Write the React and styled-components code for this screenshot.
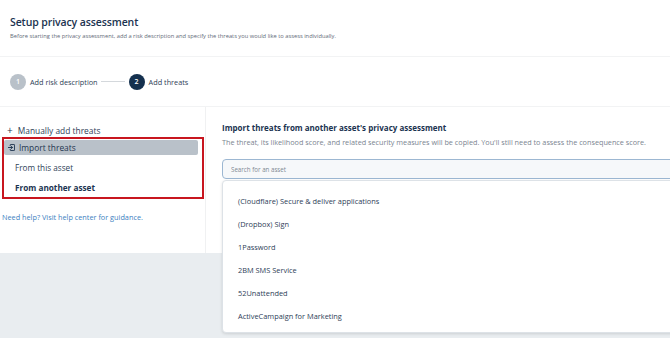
import React from "react";
import styled, { createGlobalStyle } from "styled-components";

const GlobalStyle = createGlobalStyle`
  html, body {
    margin: 0;
    padding: 0;
    background: #e9edf0;
    font-family: "Open Sans", "Liberation Sans", sans-serif;
    overflow: hidden;
  }
`;

const assets = [
  "(Cloudflare) Secure & deliver applications",
  "(Dropbox) Sign",
  "1Password",
  "2BM SMS Service",
  "52Unattended",
  "ActiveCampaign for Marketing",
];

function ImportIcon() {
  return (
    <svg width="7" height="7" viewBox="0 0 16 16" fill="none" stroke="#1f3550" strokeWidth="2.2" strokeLinecap="round" strokeLinejoin="round">
      <path d="M5 3.5V2.5A1.5 1.5 0 0 1 6.5 1h7A1.5 1.5 0 0 1 15 2.5v11a1.5 1.5 0 0 1-1.5 1.5h-7A1.5 1.5 0 0 1 5 13.5V12.5" />
      <path d="M1 8h9M7 5l3 3-3 3" />
    </svg>
  );
}

export default function App() {
  return (
    <Page>
      <GlobalStyle />
      <Card>
        <Header>
          <Title>Setup privacy assessment</Title>
          <Subtitle>
            Before starting the privacy assessment, add a risk description and specify the threats you would like to assess individually.
          </Subtitle>
        </Header>
        <Stepper>
          <Step>
            <StepDot done>1</StepDot>
            <StepLabel>Add risk description</StepLabel>
          </Step>
          <StepLine />
          <Step>
            <StepDot>2</StepDot>
            <StepLabel>Add threats</StepLabel>
          </Step>
        </Stepper>
        <Body>
          <Sidebar>
            <MenuItem>
              <Plus>+</Plus>Manually add threats
            </MenuItem>
            <ImportBox>
              <ImportRow>
                <ImportIcon />
                Import threats
              </ImportRow>
              <SubItem>From this asset</SubItem>
              <SubItem active>From another asset</SubItem>
            </ImportBox>
            <HelpLink>Need help? Visit help center for guidance.</HelpLink>
          </Sidebar>
          <Main>
            <SectionTitle>Import threats from another asset's privacy assessment</SectionTitle>
            <SectionText>
              The threat, its likelihood score, and related security measures will be copied. You'll still need to assess the consequence score.
            </SectionText>
            <SearchWrap>
              <SearchInput placeholder="Search for an asset" />
              <Dropdown>
                {assets.map((a) => (
                  <Option key={a}>{a}</Option>
                ))}
              </Dropdown>
            </SearchWrap>
          </Main>
        </Body>
      </Card>
    </Page>
  );
}

const Page = styled.div`
  width: 100vw;
  height: 100vh;
  overflow: hidden;
`;

const Card = styled.div`
  background: #fff;
`;

const Header = styled.div`
  padding: 16px 10px 0;
  height: 40px;
  border-bottom: 1px solid #f2f3f4;
`;

const Title = styled.h1`
  margin: 0;
  font-size: 10.5px;
  font-weight: 600;
  letter-spacing: -0.1px;
  color: #1b3350;
  line-height: 13px;
`;

const Subtitle = styled.p`
  margin: 3px 0 0;
  font-size: 5.75px;
  color: #5f6b78;
  line-height: 8px;
`;

const Stepper = styled.div`
  height: 49px;
  display: flex;
  align-items: center;
  padding-left: 10px;
  gap: 3px;
  border-bottom: 1px solid #f2f3f4;
`;

const Step = styled.div`
  display: flex;
  align-items: center;
  gap: 4px;
`;

const StepDot = styled.div`
  width: 16px;
  height: 16px;
  border-radius: 50%;
  background: ${(p) => (p.done ? "#b9c1c9" : "#14304e")};
  color: #fff;
  font-size: 7px;
  font-weight: 600;
  display: flex;
  align-items: center;
  justify-content: center;
`;

const StepLabel = styled.span`
  font-size: 7.3px;
  color: #2f4258;
`;

const StepLine = styled.div`
  width: 24px;
  height: 1px;
  background: #d4d8dc;
  margin-right: 1px;
`;

const Body = styled.div`
  display: grid;
  grid-template-columns: 206px 1fr;
  height: 146px;
`;

const Sidebar = styled.div`
  border-right: 1px solid #f0f1f2;
  padding-top: 17px;
`;

const MenuItem = styled.div`
  display: flex;
  align-items: center;
  padding-left: 7px;
  height: 12px;
  font-size: 8.4px;
  color: #2f4258;
`;

const Plus = styled.span`
  font-size: 10px;
  color: #1f3550;
  margin-right: 5px;
  line-height: 10px;
`;

const ImportBox = styled.div`
  margin: 1px 1px 0 2px;
  border: 2px solid #c8161f;
  padding: 1px 4px 0 0;
`;

const ImportRow = styled.div`
  display: flex;
  align-items: center;
  gap: 4px;
  height: 15px;
  margin-bottom: 2px;
  padding-left: 4px;
  background: #b9c1c9;
  border-radius: 2px;
  font-size: 8.4px;
  color: #1f3550;
`;

const SubItem = styled.div`
  height: 20px;
  display: flex;
  align-items: center;
  padding-left: 11px;
  font-size: 8.2px;
  font-weight: ${(p) => (p.active ? 700 : 400)};
  color: ${(p) => (p.active ? "#1b3350" : "#2f4258")};
`;

const HelpLink = styled.a`
  display: block;
  margin: 13px 0 0 2px;
  font-size: 7.3px;
  color: #3d7fc1;
`;

const Main = styled.div`
  padding: 15px 0 0 16px;
`;

const SectionTitle = styled.div`
  font-size: 8px;
  font-weight: 700;
  color: #1b3350;
  line-height: 12px;
`;

const SectionText = styled.div`
  margin-top: 3px;
  font-size: 7.25px;
  color: #7a8490;
  line-height: 10px;
`;

const SearchWrap = styled.div`
  position: relative;
  margin-top: 12px;
  margin-right: -20px;
`;

const SearchInput = styled.input`
  display: block;
  box-sizing: border-box;
  width: 100%;
  height: 20px;
  padding: 0 8px;
  border: 1px solid #9cb7d2;
  border-radius: 4px;
  background: #f6f8fa;
  font-family: inherit;
  font-size: 6.2px;
  color: #2f4258;
  outline: none;
  &::placeholder {
    color: #7f8893;
  }
`;

const Dropdown = styled.div`
  position: absolute;
  top: 21px;
  left: 0;
  right: 0;
  box-sizing: border-box;
  height: 153px;
  background: #fff;
  border: 1px solid #dde2e7;
  border-radius: 4px;
  box-shadow: 0 1px 3px rgba(0, 0, 0, 0.12);
  padding-top: 8px;
`;

const Option = styled.div`
  height: 23px;
  display: flex;
  align-items: center;
  padding-left: 15px;
  font-size: 7.4px;
  color: #2e4058;
`;
